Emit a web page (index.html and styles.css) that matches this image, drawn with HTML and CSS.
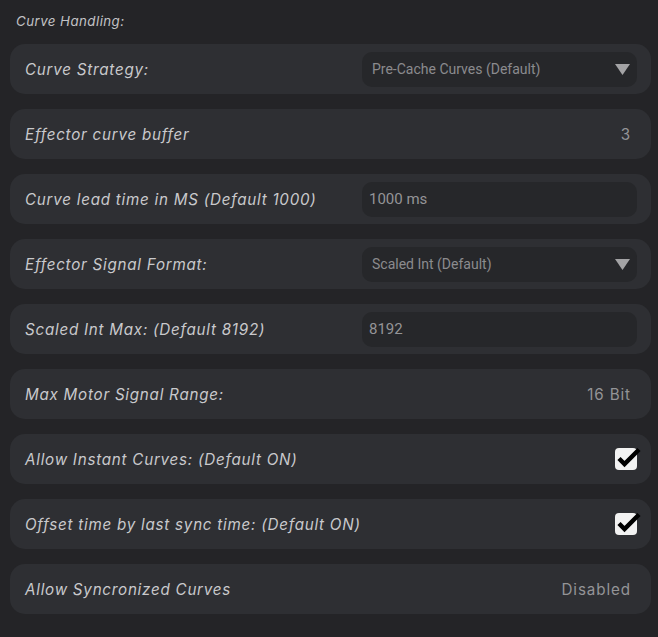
FILE: index.html
```html
<!DOCTYPE html>
<html>
<head>
<meta charset="utf-8">
<link rel="stylesheet" href="styles.css">
</head>
<body>
<div class="panel">
  <div class="heading">Curve Handling:</div>
  <div class="rows">
    <div class="row">
      <span class="label">Curve Strategy:</span>
      <div class="field select"><span>Pre-Cache Curves (Default)</span><svg class="caret" width="15" height="11" viewBox="0 0 15 11"><polygon points="0,0 15,0 7.5,11" fill="#a3a3a5"/></svg></div>
    </div>
    <div class="row">
      <span class="label">Effector curve buffer</span>
      <span class="value">3</span>
    </div>
    <div class="row">
      <span class="label">Curve lead time in MS (Default 1000)</span>
      <div class="field input">1000 ms</div>
    </div>
    <div class="row">
      <span class="label">Effector Signal Format:</span>
      <div class="field select"><span>Scaled Int (Default)</span><svg class="caret" width="15" height="11" viewBox="0 0 15 11"><polygon points="0,0 15,0 7.5,11" fill="#a3a3a5"/></svg></div>
    </div>
    <div class="row">
      <span class="label">Scaled Int Max: (Default 8192)</span>
      <div class="field input">8192</div>
    </div>
    <div class="row">
      <span class="label">Max Motor Signal Range:</span>
      <span class="value">16 Bit</span>
    </div>
    <div class="row">
      <span class="label">Allow Instant Curves: (Default ON)</span>
      <span class="check"><svg width="26" height="24" viewBox="0 0 26 24"><rect x="0" y="1" width="22" height="22" rx="4" fill="#f2f2f2"/><path d="M4 11.5 L9.5 17 L24 2.5" fill="none" stroke="#000" stroke-width="4.5"/></svg></span>
    </div>
    <div class="row">
      <span class="label">Offset time by last sync time: (Default ON)</span>
      <span class="check"><svg width="26" height="24" viewBox="0 0 26 24"><rect x="0" y="1" width="22" height="22" rx="4" fill="#f2f2f2"/><path d="M4 11.5 L9.5 17 L24 2.5" fill="none" stroke="#000" stroke-width="4.5"/></svg></span>
    </div>
    <div class="row">
      <span class="label">Allow Syncronized Curves</span>
      <span class="value">Disabled</span>
    </div>
  </div>
</div>
</body>
</html>
```
FILE: styles.css
```css
html, body {
  margin: 0;
  padding: 0;
  background: #242427;
}
body {
  width: 658px;
  height: 637px;
  overflow: hidden;
}
.panel {
  padding: 0 7px 0 10px;
}
.heading {
  font-family: Inter, "Noto Sans", sans-serif;
  font-style: italic;
  font-size: 13.3px;
  letter-spacing: 0.45px;
  color: #c2c2c5;
  height: 44px;
  line-height: 42px;
  padding-left: 6px;
}
.rows {
  display: flex;
  flex-direction: column;
  gap: 15px;
}
.row {
  height: 50px;
  box-sizing: border-box;
  background: #2e2f33;
  border-radius: 15px;
  display: flex;
  align-items: center;
  justify-content: space-between;
  padding: 0 20px 0 15px;
}
.label {
  font-family: Inter, "Noto Sans", sans-serif;
  font-style: italic;
  font-size: 15.2px;
  letter-spacing: 0.75px;
  color: #c9c9cc;
}
.value {
  font-family: Inter, "Noto Sans", sans-serif;
  font-size: 15.2px;
  letter-spacing: 0.9px;
  color: #949497;
}
.field {
  width: 275px;
  height: 35px;
  box-sizing: border-box;
  background: #26272a;
  border-radius: 10px;
  margin-right: -6px;
  display: flex;
  align-items: center;
  font-family: Roboto, "Liberation Sans", sans-serif;
  color: #8b8b8e;
}
.select {
  justify-content: space-between;
  padding: 0 7px 0 10px;
  font-size: 14px;
}
.input {
  padding-left: 7px;
  font-size: 15px;
  color: #949497;
}
.caret {
  display: block;
}
.check {
  display: flex;
  margin-right: -10px;
}
.check svg {
  display: block;
}
```
